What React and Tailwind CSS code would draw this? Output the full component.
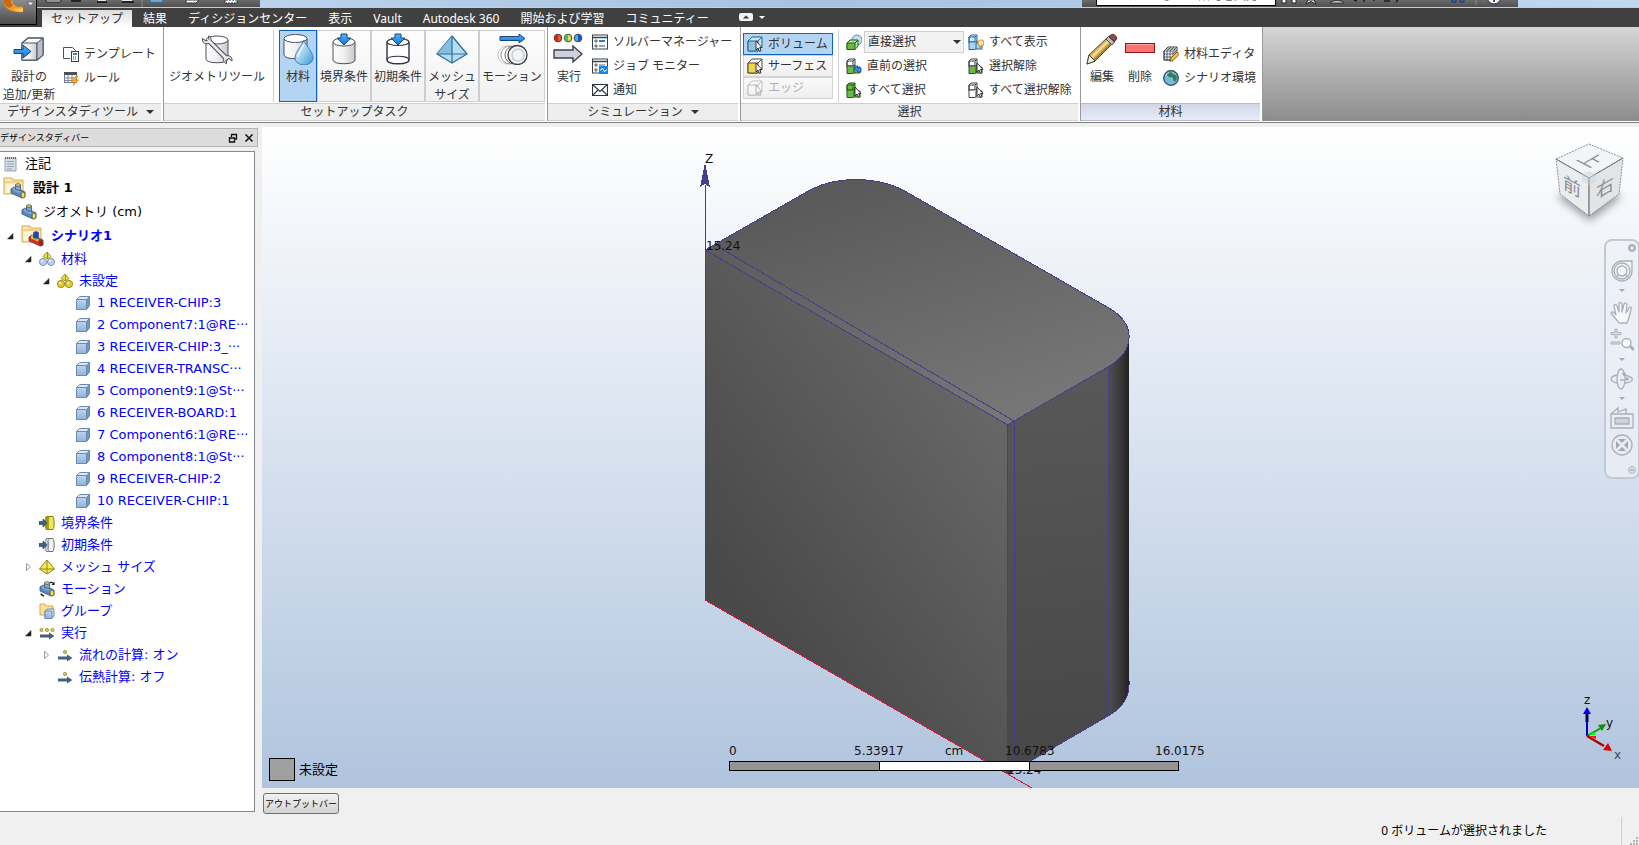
import { useState } from 'react'

const UI_FONT = "font-['Noto_Sans','Noto_Sans_CJK_JP',sans-serif]"
const TREE_FONT = "font-['DejaVu_Sans','Noto_Sans_CJK_JP',sans-serif]"

const TABS = ['セットアップ', '結果', 'ディシジョンセンター', '表示', 'Vault', 'Autodesk 360', '開始および学習', 'コミュニティー']

const PARTS = [
  '1 RECEIVER-CHIP:3',
  '2 Component7:1@RE···',
  '3 RECEIVER-CHIP:3_···',
  '4 RECEIVER-TRANSC···',
  '5 Component9:1@St···',
  '6 RECEIVER-BOARD:1',
  '7 Component6:1@RE···',
  '8 Component8:1@St···',
  '9 RECEIVER-CHIP:2',
  '10 RECEIVER-CHIP:1',
]

/* ---------- shared icon pieces ---------- */

function Big({ children }) {
  return <svg viewBox="0 0 32 32" className="w-8 h-8 shrink-0" fill="none" aria-hidden="true">{children}</svg>
}

function Small({ children }) {
  return <svg viewBox="0 0 16 16" className="w-4 h-4 shrink-0" fill="none" aria-hidden="true">{children}</svg>
}

function Defs() {
  return (
    <svg className="absolute w-0 h-0" aria-hidden="true">
      <defs>
        <linearGradient id="metal" x1="0" x2="1" y1="0" y2="0">
          <stop offset="0" stopColor="#fdfdfd" />
          <stop offset="0.5" stopColor="#f0f0f2" />
          <stop offset="1" stopColor="#c9c9cd" />
        </linearGradient>
        <linearGradient id="drop" x1="0" x2="1" y1="0" y2="1">
          <stop offset="0" stopColor="#e2f3fc" />
          <stop offset="0.5" stopColor="#9fd0f0" />
          <stop offset="1" stopColor="#3f95d8" />
        </linearGradient>
        <linearGradient id="arrow" x1="0" x2="0" y1="0" y2="1">
          <stop offset="0" stopColor="#56b4ff" />
          <stop offset="1" stopColor="#0f74d8" />
        </linearGradient>
        <linearGradient id="cubeBlue" x1="0" x2="0" y1="0" y2="1">
          <stop offset="0" stopColor="#bcd4ee" />
          <stop offset="1" stopColor="#8fb3da" />
        </linearGradient>
      </defs>
    </svg>
  )
}

function DownArrow({ className = '' }) {
  return (
    <svg viewBox="0 0 8 4" className={`w-2 h-1 shrink-0 ${className}`} aria-hidden="true">
      <path d="M0 0h8L4 4z" fill="currentColor" />
    </svg>
  )
}

function Cursor() {
  return <path d="M9 5v9l2-2 1.500 3.500 1.500-.7-1.400-3.300H15z" fill="#fff" stroke="#222" strokeWidth="0.900" />
}

/* ---------- ribbon icons ---------- */

const DesignUpdateIcon = () => (
  <Big>
    <path d="M9 10l6-5h15v17l-6 5H9z" fill="#fff" stroke="#4a5260" strokeWidth="1.400" strokeLinejoin="round" />
    <path d="M9 10h15v17H9z" fill="url(#metal)" stroke="#4a5260" />
    <path d="M24 10l6-5v17l-6 5z" fill="#b9bec8" stroke="#4a5260" />
    <path d="M1 16.500h9v-4.500l8 6.500-8 6.500v-4.500H1z" fill="url(#arrow)" stroke="#17467c" />
  </Big>
)

const TemplateIcon = () => (
  <Small>
    <path d="M.5 12.500V1.500h9l3 3v1" stroke="#4a5260" />
    <path d="M.5 12.500H7" stroke="#4a5260" />
    <rect x="8.500" y="5.500" width="7" height="10" fill="#fff" stroke="#39404c" />
    <rect x="10" y="7" width="4" height="2" fill="#2d80cf" />
    <path d="M10 11h4M10 13h4" stroke="#39404c" strokeDasharray="1 1" />
  </Small>
)

const RuleIcon = () => (
  <Small>
    <rect x="1.500" y="2.500" width="12" height="10" fill="#fff" stroke="#6f7782" />
    <path d="M1 2h13v3H1z" fill="#4a5260" />
    <path d="M1 8h12M1 10.500h11M5 5v8M9 5v8" stroke="#7f8792" />
    <path d="M13 6l-4 5h3l-2 4.500 5.500-5.500h-3l2.500-4z" fill="#ffb522" stroke="#e07d00" strokeWidth="0.700" />
  </Small>
)

const GeometryIcon = () => (
  <Big>
    <path d="M5 7v19c0 5 22 5 22 0V7" fill="url(#metal)" stroke="#4a5058" />
    <ellipse cx="16" cy="7" rx="11" ry="4" fill="#fff" stroke="#4a5058" />
    <path d="M7 7l19 19" stroke="#41474f" strokeWidth="5" />
    <path d="M7.500 3l.5 4-3 1-3.500-2.500C1 10 5 12 8.500 10 11 7 10.500 4 7.500 3zM25.500 30.500l-.5-4 3-1 3 2.500c.5-4.500-3.500-6.500-7-4.500-2.500 3-1.500 6 1.500 7z" fill="#eceef0" stroke="#41474f" />
    <path d="M7 7l19 19" stroke="#eceef0" strokeWidth="3" />
  </Big>
)

const MaterialIcon = () => (
  <Big>
    <path d="M2 6v16c0 5 23 5 23 0V6" fill="url(#metal)" stroke="#4a5058" />
    <ellipse cx="13.500" cy="5.500" rx="11.500" ry="4" fill="#fff" stroke="#4a5058" />
    <path d="M22 7c-2 6-9 12-9 18a9 7 0 0 0 18 0c0-6-7-12-9-18z" fill="url(#drop)" stroke="#3f7fb8" />
    <path d="M22 11c-2 5-6 9-6 13" stroke="#fff" strokeWidth="1.500" opacity="0.700" />
  </Big>
)

const BoundaryIcon = () => (
  <Big>
    <path d="M5 9v18c0 5 22 5 22 0V9" fill="url(#metal)" stroke="#4a5058" />
    <ellipse cx="16" cy="9" rx="11" ry="4" fill="#fff" stroke="#4a5058" />
    <path d="M13 1h6v4h4l-7 7-7-7h4z" fill="url(#arrow)" stroke="#17467c" />
  </Big>
)

const InitialIcon = () => (
  <Big>
    <path d="M5 9v18c0 5 22 5 22 0V9" fill="#fff" stroke="#30353d" strokeWidth="1.400" />
    <ellipse cx="16" cy="9" rx="11" ry="3.500" fill="#fff" stroke="#30353d" strokeWidth="1.200" />
    <path d="M5 27c0-5 22-5 22 0" stroke="#30353d" strokeWidth="1.200" />
    <path d="M13 1h6v4h4l-7 7-7-7h4z" fill="url(#arrow)" stroke="#17467c" />
  </Big>
)

const MeshIcon = () => (
  <Big>
    <path d="M16 3L1 21l15 9 15-9z" fill="#b5dcf0" stroke="#2c6f9f" strokeWidth="1.300" strokeLinejoin="round" />
    <path d="M16 3v18L1 21z" fill="#82bfe0" />
    <path d="M16 3v27M1 21h30" stroke="#2c6f9f" strokeWidth="1.200" />
  </Big>
)

const MotionIcon = () => (
  <Big>
    <path d="M4 3.500h19V1l6 4.500-6 4.500V7.500H4z" fill="url(#arrow)" stroke="#17467c" />
    <circle cx="11" cy="22" r="9" stroke="#c9c9cc" />
    <circle cx="14" cy="22" r="9" fill="#fff" stroke="#9a9a9e" />
    <circle cx="18" cy="22" r="9" fill="#fff" stroke="#6a6a70" />
    <circle cx="21.500" cy="22" r="9.500" fill="#f4f4f5" stroke="#3a4048" strokeWidth="1.300" />
    <circle cx="22" cy="22" r="6" stroke="#c9cbd0" strokeWidth="1.500" />
  </Big>
)

const SolveIcon = () => (
  <Big>
    <circle cx="5" cy="5" r="3.800" fill="#f2562a" stroke="#3a3a3a" />
    <path d="M5 1.500a3.500 3.500 0 0 0 0 7z" fill="#d91c1c" />
    <circle cx="15" cy="5" r="3.800" fill="#e6e23a" stroke="#3a3a3a" />
    <path d="M15 1.500a3.500 3.500 0 0 0 0 7z" fill="#35c46f" />
    <circle cx="25" cy="5" r="3.800" fill="#39c1d6" stroke="#3a3a3a" />
    <path d="M25 1.500a3.500 3.500 0 0 1 0 7z" fill="#2a4ccc" />
    <path d="M1 17h19v-4l9 8-9 8v-4H1z" fill="#cdd2dc" stroke="#3c424d" strokeWidth="1.400" />
  </Big>
)

const SolverManagerIcon = () => (
  <Small>
    <rect x="0.500" y="1" width="15" height="14" fill="#fff" stroke="#39404c" />
    <path d="M1 3.500h14" stroke="#39404c" strokeWidth="1.500" />
    <path d="M3 6h2v2H3zM3 11h2v2H3z" stroke="#39404c" strokeWidth="0.800" />
    <path d="M7 7h6" stroke="#1a84ee" strokeWidth="2" />
    <path d="M7 12h6" stroke="#39404c" />
  </Small>
)

const JobMonitorIcon = () => (
  <Small>
    <rect x="0.500" y="1" width="15" height="14" fill="#fff" stroke="#39404c" />
    <path d="M1 3.500h14" stroke="#39404c" strokeWidth="1.500" />
    <path d="M3 6h2v2H3zM3 11h2v2H3zM7 7h6" stroke="#39404c" strokeWidth="0.800" />
    <rect x="7" y="8" width="9" height="8" fill="#1a84ee" />
    <path d="M8 12h1l1.500-2 2 4 1.500-2h1" stroke="#fff" strokeWidth="0.900" />
  </Small>
)

const MailIcon = () => (
  <Small>
    <path d="M0.500 2.500h15v11H.5zM.5 2.500l7.500 7 7.500-7M.5 13.500L6 8M15.500 13.500L10 8" stroke="#30353d" strokeWidth="1.100" />
  </Small>
)

function PickIcon({ face, top, line, faded }) {
  return (
    <Small>
      <g opacity={faded ? 0.35 : 1}>
        <path d="M1 5l4-4h10v10l-4 4H1z" fill={top} stroke={line} />
        <path d="M1 5h10v10H1z" fill={face} stroke={line} />
        <path d="M11 5l4-4" stroke={line} />
        <Cursor />
      </g>
    </Small>
  )
}

const DirectSelectIcon = () => (
  <Small>
    <circle cx="11" cy="6" r="5" fill="#bfe0f2" stroke="#5d8fb0" />
    <path d="M1 9l3-3h8v6l-3 3.500H1z" fill="#bfe3a4" stroke="#205f14" />
    <path d="M1 9h8v6.500H1z" fill="#6cb844" stroke="#205f14" />
    <path d="M9 9l3-3" stroke="#205f14" />
  </Small>
)

function StackIcon({ upper, lower, line, children }) {
  return (
    <Small>
      <path d="M1 3l2-2h6v7l-2 1H1z" fill={upper} stroke={line} />
      <path d="M1 3h6v5H1zM7 3l2-2" stroke={line} />
      <path d="M1 8h6l2-1v7l-2 1.500H1z" fill={lower} stroke={line} />
      <path d="M8 9h6v6H8z" fill={lower} stroke={line} />
      {children}
    </Small>
  )
}

const BackArrow = () => <path d="M8 11l3.500-3.500V10H15v4h-3.500v-1.500z" fill="#2f92f0" stroke="#12539a" strokeWidth="0.800" />
const Bulb = () => (
  <g>
    <circle cx="13" cy="9" r="3" fill="#ffe9a0" stroke="#f29a1e" strokeWidth="1.200" />
    <path d="M11.500 12.500h3v3h-3z" fill="#8a94a3" />
  </g>
)

const PencilIcon = () => (
  <Big>
    <path d="M3 22L23 3l6 5L9 28l-8 3z" fill="#d9b35a" stroke="#4b4232" strokeLinejoin="round" />
    <path d="M6 24L25.500 5" stroke="#f3e0a4" strokeWidth="2" />
    <path d="M8 27L28 7.500" stroke="#a67c26" strokeWidth="1.500" />
    <path d="M3 22l6 6-8 3z" fill="#f4f1ea" stroke="#4b4232" />
    <path d="M20 6l6 6 2.500-3-6-5.500z" fill="#b9bfc9" stroke="#474d57" />
    <path d="M23 3.500l2.500-2c2-1 6 2 5 4.500l-2 2.500z" fill="#8f4a44" stroke="#4d2b28" />
  </Big>
)

const RemoveIcon = () => (
  <Big>
    <rect x="1.500" y="10.500" width="29" height="9" fill="#fa7471" stroke="#8c1414" />
    <path d="M2.500 11.500h27" stroke="#fca5a2" />
  </Big>
)

const MaterialEditorIcon = () => (
  <Small>
    <path d="M1 5l4-4h9v9l-4 4H1z" fill="#fff" stroke="#3b424d" />
    <path d="M1 5h9v9H1zM10 5l4-4M1 8h9M1 11h9M4 5v9M7 5v9M4 5l4-4M7 5l4-4M12 3v9M10 8l4-4M3 3h9" stroke="#3b424d" strokeWidth="0.800" />
    <path d="M7 15.500l1-3.500 6-6 2 2.500-6 6z" fill="#ffbd3a" stroke="#6b4a13" strokeWidth="0.800" />
  </Small>
)

const GlobeIcon = () => (
  <Small>
    <circle cx="8" cy="8" r="7.300" fill="#79b9d8" stroke="#263f5c" strokeWidth="1.200" />
    <path d="M4 3.500c2-2 5-1.500 5.500 0s3 .5 4 2.500-.5 6-2 5.500-1-3-2-4-3 .5-4-1-2-1-1.500-3z" fill="#2f7d54" />
    <path d="M3 6c0-1 1-3 3-3.500" stroke="#d8f0fa" />
  </Small>
)

/* ---------- ribbon pieces ---------- */

function Panel({ title, menu, tint, className = '', children }) {
  return (
    <section className={`flex flex-col bg-white border-r border-[#9a9a9a] ${className}`}>
      <div className="flex h-[76px] pt-[3px]">{children}</div>
      <div
        className={`mr-0.5 flex h-[18px] items-center justify-center gap-2 border-y ${
          tint ? 'border-[#b8bccb] bg-linear-to-b from-[#d2d6e6] to-[#e8edfb]' : 'border-[#cfcfcf] bg-[#eeeeee]'
        }`}
      >
        <span>{title}</span>
        {menu && <DownArrow />}
      </div>
    </section>
  )
}

function BigButton({ icon, label, className = '' }) {
  return (
    <button type="button" className={`flex flex-col items-center whitespace-pre-line pt-[3px] leading-[18px] ${className}`}>
      {icon}
      <span className="mt-[3px]">{label}</span>
    </button>
  )
}

function SmallButton({ icon, label }) {
  return (
    <button type="button" className="flex h-6 items-center gap-[5px] text-left leading-4">
      {icon}
      <span>{label}</span>
    </button>
  )
}

const TASKS = [
  { label: '材料', icon: <MaterialIcon />, width: 'w-[38px]' },
  { label: '境界条件', icon: <BoundaryIcon />, width: 'w-[54px]' },
  { label: '初期条件', icon: <InitialIcon />, width: 'w-[54px]' },
  { label: 'メッシュ\nサイズ', icon: <MeshIcon />, width: 'w-[54px]' },
  { label: 'モーション', icon: <MotionIcon />, width: 'w-[66px]' },
]

const PICKS = [
  { label: 'ボリューム', icon: <PickIcon face="#8cc4e6" top="#c8e6f6" line="#2f5f86" /> },
  { label: 'サーフェス', icon: <PickIcon face="#f3d44a" top="#fff" line="#4a4a3a" /> },
  { label: 'エッジ', icon: <PickIcon face="#fff" top="#fff" line="#555" faded />, disabled: true },
]

function Ribbon() {
  const [task, setTask] = useState('材料')
  const [pick, setPick] = useState('ボリューム')

  return (
    <div className="flex h-24 shrink-0 border-b border-[#808080] bg-white">
      <div className="mb-px flex w-full whitespace-nowrap bg-linear-to-b from-[#d6d6d6] to-[#8c8c8c]">
        <Panel title="デザインスタディツール" menu className="w-[164px] shrink-0">
          <BigButton icon={<DesignUpdateIcon />} label={'設計の\n追加/更新'} className="w-[58px]" />
          <div className="flex flex-col pl-[5px] pt-3">
            <SmallButton icon={<TemplateIcon />} label="テンプレート" />
            <SmallButton icon={<RuleIcon />} label="ルール" />
          </div>
        </Panel>

        <Panel title="セットアップタスク" className="w-[384px] shrink-0">
          <BigButton icon={<GeometryIcon />} label="ジオメトリツール" className="ml-1 w-[98px]" />
          <div className="ml-[7px] mr-[5px] h-[72px] w-px bg-[#cfcfcf]" />
          {TASKS.map((t) => (
            <button
              key={t.label}
              type="button"
              aria-pressed={task === t.label}
              onClick={() => setTask(t.label)}
              className={`flex h-[72px] flex-col items-center whitespace-pre-line border pt-0.5 leading-[18px] ${t.width} ${
                task === t.label
                  ? 'border-[#1164bd] bg-[#b4d4f3]'
                  : 'border-[#cdcdcd] bg-linear-to-b from-[#fdfdfd] to-[#f1f1f1]'
              }`}
            >
              {t.icon}
              <span className="mt-[3px]">{t.label}</span>
            </button>
          ))}
        </Panel>

        <Panel title="シミュレーション" menu className="w-[193px] shrink-0">
          <BigButton icon={<SolveIcon />} label="実行" className="ml-[3px] w-9" />
          <div className="flex flex-col pl-[5px]">
            <SmallButton icon={<SolverManagerIcon />} label="ソルバーマネージャー" />
            <SmallButton icon={<JobMonitorIcon />} label="ジョブ モニター" />
            <SmallButton icon={<MailIcon />} label="通知" />
          </div>
        </Panel>

        <Panel title="選択" className="w-[340px] shrink-0">
          <div className="flex flex-col pl-0.5 pt-[3px]">
            {PICKS.map((p) => (
              <button
                key={p.label}
                type="button"
                disabled={p.disabled}
                aria-pressed={pick === p.label}
                onClick={() => setPick(p.label)}
                className={`flex h-[22px] w-[90px] items-center gap-[5px] border pl-[3px] leading-4 disabled:text-[#b0b0b0] ${
                  pick === p.label
                    ? 'border-[#1164bd] bg-[#b4d4f3]'
                    : 'border-[#d4d4d4] bg-linear-to-b from-[#fafafa] to-[#efefef]'
                }`}
              >
                {p.icon}
                <span>{p.label}</span>
              </button>
            ))}
          </div>
          <div className="ml-[5px] mr-[7px] h-[72px] w-px bg-[#cfcfcf]" />
          <div className="flex w-[122px] flex-col">
            <div className="flex h-6 items-center gap-0.5">
              <DirectSelectIcon />
              <div className="relative">
                <select
                  aria-label="選択モード"
                  className="h-[22px] w-[100px] appearance-none border border-[#cfcfcf] bg-[#f2f2f2] pl-[3px] leading-4"
                >
                  <option>直接選択</option>
                </select>
                <DownArrow className="pointer-events-none absolute right-[3px] top-[9px]" />
              </div>
            </div>
            <SmallButton
              icon={<StackIcon upper="#fff" lower="#6cb844" line="#3b424d"><BackArrow /></StackIcon>}
              label="直前の選択"
            />
            <SmallButton
              icon={<StackIcon upper="#6cb844" lower="#6cb844" line="#205f14"><Cursor /></StackIcon>}
              label="すべて選択"
            />
          </div>
          <div className="flex flex-col">
            <SmallButton icon={<StackIcon upper="#cfe8fa" lower="#a9d3f2" line="#2467a3"><Bulb /></StackIcon>} label="すべて表示" />
            <SmallButton icon={<StackIcon upper="#fff" lower="#6cb844" line="#3b424d"><Cursor /></StackIcon>} label="選択解除" />
            <SmallButton icon={<StackIcon upper="#fff" lower="#fff" line="#3b424d"><Cursor /></StackIcon>} label="すべて選択解除" />
          </div>
        </Panel>

        <Panel title="材料" tint className="w-[182px] shrink-0">
          <BigButton icon={<PencilIcon />} label="編集" className="ml-[3px] w-9" />
          <BigButton icon={<RemoveIcon />} label="削除" className="ml-0.5 w-9" />
          <div className="flex flex-col pl-[5px] pt-3">
            <SmallButton icon={<MaterialEditorIcon />} label="材料エディタ" />
            <SmallButton icon={<GlobeIcon />} label="シナリオ環境" />
          </div>
        </Panel>
      </div>
    </div>
  )
}

/* ---------- window frame and tabs ---------- */

function TitleStrip() {
  return (
    <header className="flex h-2 shrink-0 items-end overflow-hidden border-b border-[#c3cfdd] bg-linear-to-r from-[#c4daf0] via-[#a6c2e0] to-[#c0d8f0]">
      <div className="flex h-[7px] w-[260px] items-end bg-linear-to-b from-[#6b6b6b] to-[#505050]">
        <svg viewBox="0 0 260 7" className="h-[7px] w-[260px]" fill="none" aria-hidden="true">
          <path d="M46 0v2h15V0z" fill="#fff" stroke="#222" />
          <path d="M71 1h10M97 2h10M122 2h12" stroke="#222" strokeWidth="2" />
          <path d="M98 0h8M122 0h10" stroke="#e4e8ee" strokeWidth="2" />
          <path d="M142 0v7" stroke="#8a8a8a" />
          <path d="M150 0v2h13V0z" fill="#bfe0f2" stroke="#2467a3" />
          <path d="M186 0v3h10l3-3z" fill="#fff" stroke="#333" />
          <path d="M225 0v3h12V0z" fill="#fff" stroke="#222" strokeDasharray="2 1" />
        </svg>
      </div>
      <div className="grow" />
      <div className="flex h-[7px] w-[436px] items-end bg-linear-to-b from-[#6b6b6b] to-[#505050]">
        <input
          aria-label="検索"
          placeholder="キーワードまたは語句を入力"
          className="mb-px ml-3.5 h-5 w-[180px] shrink-0 border border-black bg-white px-[5px] pb-px text-xs placeholder:text-[#777]"
        />
        <svg viewBox="0 0 240 7" className="h-[7px] w-60 shrink-0" fill="none" aria-hidden="true">
          <path d="M6 0v3h4V0M16 0v3h4V0" fill="#fff" stroke="#222" />
          <path d="M32 0l-2 4 5-2.500 5 2.500-2-4z" fill="#fff" stroke="#222" />
          <path d="M54 3c0-3 14-3 14 0z" fill="#fff" stroke="#222" />
          <path d="M78 0l3 1M88 0v2M98 0v1M108 1h6M122 0l-2 2" stroke="#1c1c1c" strokeWidth="1.500" />
          <path d="M176 0v2h4V0M184 0v2h4V0" fill="#3b66b8" stroke="#1b2f66" />
          <path d="M200 0v5" stroke="#8a8a8a" />
          <circle cx="218" cy="-3" r="7" fill="#fff" stroke="#222" />
          <path d="M218 0v2" stroke="#2458b0" strokeWidth="2" />
        </svg>
      </div>
      <div className="w-[121px]" />
    </header>
  )
}

function TabBar() {
  const [tab, setTab] = useState('セットアップ')
  return (
    <nav className="flex h-[19px] shrink-0 items-end bg-[#404040] pl-[42px]">
      {TABS.map((t) => (
        <button
          key={t}
          type="button"
          onClick={() => setTab(t)}
          className={`h-[17px] whitespace-nowrap leading-[17px] ${
            t === tab ? 'bg-linear-to-b from-[#dcdcdc] to-white px-[9px] text-[#333]' : 'ml-px px-2.5 text-white'
          }`}
        >
          {t}
        </button>
      ))}
      <button type="button" aria-label="リボンの最小化" className="mb-1.5 ml-5 flex items-center gap-1.5 text-white">
        <svg viewBox="0 0 14 8" className="h-2 w-3.5" aria-hidden="true">
          <rect width="14" height="8" rx="2" fill="#f2f2f2" />
          <path d="M4 5.500h6L7 2.500z" fill="#333" />
        </svg>
        <svg viewBox="0 0 6 3" className="h-[3px] w-1.5" aria-hidden="true"><path d="M0 0h6L3 3z" fill="#fff" /></svg>
      </button>
    </nav>
  )
}

function AppButton() {
  return (
    <button
      type="button"
      aria-label="アプリケーションメニュー"
      className="absolute left-0 top-0 h-[25px] w-[37px] border-b border-r border-black bg-linear-to-b from-[#8d8d8d] to-[#4b4b4b]"
    >
      <svg viewBox="0 0 36 24" className="h-6 w-9" fill="none" aria-hidden="true">
        <path d="M3 0c1 8 7 13 20 12V6.500c-7 1-10-1-11-6.500z" fill="#f6991d" />
        <path d="M3 0c1 4 3 7 7 8l3-3c-2-1-2-3-2-5z" fill="#c86a12" />
        <path d="M13 8c3 1 6 1 10 0v4c-4 0-8-1-10-4z" fill="#ffc34d" />
        <path d="M27 2h7l-3.500 4z" fill="#e8e8e8" stroke="#333" strokeWidth="0.500" />
      </svg>
    </button>
  )
}

/* ---------- design study tree ---------- */

const NoteIcon = () => (
  <Small>
    <path d="M2 2h11v13H2z" fill="#d5dce5" stroke="#9aa5b2" />
    <path d="M2 2h11" stroke="#5e6874" strokeWidth="2" strokeDasharray="1 1" />
    <path d="M4 5.500h7M4 8h7M4 10.500h7M4 13h5" stroke="#98a4b3" />
  </Small>
)

function Pipe({ hot }) {
  return (
    <g strokeWidth="0.800">
      <path d="M1 6l3-2 11 5v5l-3 1-11-5z" fill={hot ? '#e02a1c' : '#5b87bd'} stroke="#3a4f70" />
      <path d="M3 5l3-1 5 2.500-1 4-7-3z" fill={hot ? '#f2c521' : '#7ea6d4'} />
      <path d="M5 5.500l2-.5 2.500 1-1 3-3-1z" fill={hot ? '#37c05a' : '#7ea6d4'} />
      <path d="M5.500 2h5v5.500l-5-1z" fill={hot ? '#2437d8' : '#7ea6d4'} stroke="#3a5580" />
      <ellipse cx="8" cy="2" rx="2.500" ry="1.300" fill={hot ? '#2437d8' : '#f2e04c'} stroke="#3a5580" />
      <ellipse cx="13" cy="12" rx="2" ry="3" fill={hot ? '#c01010' : '#f2e04c'} stroke="#5a5a3a" />
    </g>
  )
}

function FolderIcon({ hot }) {
  return (
    <svg viewBox="0 0 24 24" className="h-6 w-6 shrink-0" fill="none" aria-hidden="true">
      <path d="M1 2h8l1 2h10v14H1z" fill="#fce9b4" stroke="#d6a84c" />
      <path d="M1 6h19" stroke="#e2bc6a" />
      <path d="M3 8h15v9H3z" fill="#fff4d6" />
      <g transform="translate(7 7)"><Pipe hot={hot} /></g>
    </svg>
  )
}

const PipeIcon = () => <Small><Pipe /></Small>

function SpheresIcon({ gold }) {
  const c = gold ? '#e0cf2c' : '#b9d0e8'
  const s = gold ? '#7d7311' : '#6c87a5'
  return (
    <Small>
      <path d="M8 1l4 4.500L8.500 8 4 5.500z" fill="#ecdc48" stroke="#8d8220" strokeWidth="0.800" />
      <path d="M8.500 1.500V8" stroke="#8d8220" strokeWidth="0.800" />
      <circle cx="4" cy="11" r="3.600" fill={c} stroke={s} strokeWidth="0.800" />
      <circle cx="12" cy="11" r="3.600" fill={c} stroke={s} strokeWidth="0.800" />
      <circle cx="3" cy="10" r="1" fill="#fff" opacity="0.800" />
      <circle cx="11" cy="10" r="1" fill="#fff" opacity="0.800" />
    </Small>
  )
}

const CubeIcon = () => (
  <Small>
    <path d="M1.500 4.500l3-3h10v9l-3 4h-10z" fill="#dce8f5" stroke="#6b8cb0" />
    <path d="M1.500 4.500h10v10h-10z" fill="url(#cubeBlue)" stroke="#6b8cb0" />
    <path d="M11.500 4.500l3-3v9l-3 4z" fill="#6f97c2" stroke="#6b8cb0" />
  </Small>
)

function InletIcon({ gold }) {
  return (
    <Small>
      <path d="M8 1.500h6c1.500 2 1.500 11 0 13H8c1.500-2 1.500-11 0-13z" fill={gold ? '#f3e64a' : '#eef0f2'} stroke={gold ? '#8a7d10' : '#6b737d'} />
      <path d="M7 1.500h3c-1.500 3-1.500 10 0 13H7c-1.500-2-1.500-11 0-13z" fill={gold ? '#a39a1c' : '#c5cad0'} stroke={gold ? '#8a7d10' : '#6b737d'} strokeWidth="0.600" />
      <path d="M0 6.500h4V4l4 4-4 4V9.500H0z" fill="#3c6284" stroke="#1f3a55" strokeWidth="0.600" />
    </Small>
  )
}

const TetraIcon = () => (
  <Small>
    <path d="M8 1L.5 10 8 15l7.500-5z" fill="#f4ea62" stroke="#94880f" />
    <path d="M8 1v14M.5 10h15" stroke="#94880f" />
  </Small>
)

const RotateIcon = () => (
  <Small>
    <Pipe />
    <path d="M11 1.500c2-.5 3 0 4 1.500M2 12.500c0 1 1 2 3 2.500" stroke="#111" strokeWidth="1.300" />
    <path d="M15.500 1v3h-3z" fill="#111" />
  </Small>
)

const GroupIcon = () => (
  <Small>
    <path d="M1 1h5l1 2h7v9H1z" fill="#fbdf94" stroke="#d6a84c" />
    <path d="M6 8l2-2h7v7l-2 2.500H6z" fill="#dce8f5" stroke="#6b8cb0" />
    <path d="M6 8h7v7.500H6z" fill="url(#cubeBlue)" stroke="#6b8cb0" />
  </Small>
)

function RunIcon({ single }) {
  return (
    <Small>
      {!single && <circle cx="2.500" cy="5" r="1.600" fill="#d8cf30" stroke="#77701a" strokeWidth="0.600" />}
      <circle cx="8" cy="5" r="1.600" fill="#d8cf30" stroke="#77701a" strokeWidth="0.600" />
      {!single && <circle cx="13.500" cy="5" r="1.600" fill="#d8cf30" stroke="#77701a" strokeWidth="0.600" />}
      <path d="M1 9.500h9v-2l5.500 3.500-5.500 3.500v-2H1z" fill="#43607e" />
    </Small>
  )
}

function Toggle({ state }) {
  return (
    <svg viewBox="0 0 8 8" className="mr-[7px] h-2 w-2 shrink-0" fill="none" aria-hidden="true">
      {state === 'open' && <path d="M7 1.500v5.500H1.500z" fill="#222" stroke="#222" strokeWidth="0.500" />}
      {state === 'closed' && <path d="M2.500 .5l4 3.500-4 3.500z" fill="#fff" stroke="#999" />}
    </svg>
  )
}

const INDENT = ['pl-[3px]', 'pl-[3px]', 'pl-[6px]', 'pl-[6px]', 'pl-[24px]', 'pl-[42px]', 'pl-[60px]']

const TREE = [
  { label: '注記', icon: <NoteIcon />, level: 0, tall: true, black: true, flat: true },
  { label: '設計 1', icon: <FolderIcon />, level: 1, tall: true, black: true, bold: true, flat: true },
  { label: 'ジオメトリ (cm)', icon: <PipeIcon />, level: 2, tall: true, black: true },
  { label: 'シナリオ1', icon: <FolderIcon hot />, level: 3, tall: true, bold: true, toggle: 'open' },
  { label: '材料', icon: <SpheresIcon />, level: 4, toggle: 'open' },
  { label: '未設定', icon: <SpheresIcon gold />, level: 5, toggle: 'open' },
  ...PARTS.map((p) => ({ label: p, icon: <CubeIcon />, level: 6 })),
  { label: '境界条件', icon: <InletIcon gold />, level: 4 },
  { label: '初期条件', icon: <InletIcon />, level: 4 },
  { label: 'メッシュ サイズ', icon: <TetraIcon />, level: 4, toggle: 'closed' },
  { label: 'モーション', icon: <RotateIcon />, level: 4 },
  { label: 'グループ', icon: <GroupIcon />, level: 4 },
  { label: '実行', icon: <RunIcon />, level: 4, toggle: 'open' },
  { label: '流れの計算: オン', icon: <RunIcon single />, level: 5, toggle: 'closed' },
  { label: '伝熱計算: オフ', icon: <RunIcon single />, level: 5 },
]

function StudyBar() {
  return (
    <aside className="flex w-[262px] shrink-0 flex-col pt-[5px]">
      <div className="mr-1 flex h-[19px] shrink-0 items-center border border-l-0 border-[#b4b4b4] bg-[#dcdcdc] pr-[3px] text-black">
        <h2 className="grow whitespace-nowrap text-[9px] leading-none">デザインスタディバー</h2>
        <button type="button" aria-label="フロート" className="mr-1.5">
          <svg viewBox="0 0 10 10" className="h-2.5 w-2.5" fill="none" aria-hidden="true">
            <path d="M3 1.500h6M3.500 1v3M8.500 1v5H7M1 5h6M1.500 4v5h5V4" stroke="#111" strokeWidth="1.300" />
          </svg>
        </button>
        <button type="button" aria-label="閉じる">
          <svg viewBox="0 0 10 10" className="h-2.5 w-2.5" fill="none" aria-hidden="true">
            <path d="M1.500 1.500l7 7M8.500 1.500l-7 7" stroke="#111" strokeWidth="1.600" />
          </svg>
        </button>
      </div>
      <ul className={`mb-[33px] mr-[7px] mt-1 grow border border-l-0 border-[#828790] bg-white text-[13px] ${TREE_FONT}`}>
        {TREE.map((n) => (
          <li key={n.label}>
            <button
              type="button"
              className={`flex w-full items-center gap-1.5 whitespace-nowrap text-left leading-5 ${INDENT[n.level]} ${
                n.tall ? 'h-6' : 'h-[22px]'
              } ${n.black ? 'text-black' : 'text-[#0000ff]'} ${n.bold ? 'font-bold' : ''}`}
            >
              <span className="flex items-center">
                {!n.flat && <Toggle state={n.toggle} />}
                {n.icon}
              </span>
              <span>{n.label}</span>
            </button>
          </li>
        ))}
      </ul>
    </aside>
  )
}

/* ---------- 3D viewport ---------- */

function Model() {
  return (
    <svg viewBox="262 127 1377 661" className="absolute inset-0 h-full w-full" fill="none" role="img" aria-label="モデル">
      <defs>
        <linearGradient id="faceTop" gradientUnits="userSpaceOnUse" x1="880" y1="180" x2="960" y2="425">
          <stop offset="0" stopColor="#5a5a5a" />
          <stop offset="1" stopColor="#767676" />
        </linearGradient>
        <linearGradient id="faceLeft" gradientUnits="userSpaceOnUse" x1="740" y1="600" x2="990" y2="420">
          <stop offset="0" stopColor="#494949" />
          <stop offset="1" stopColor="#666666" />
        </linearGradient>
        <linearGradient id="faceRight" gradientUnits="userSpaceOnUse" x1="1040" y1="390" x2="1070" y2="740">
          <stop offset="0" stopColor="#575757" />
          <stop offset="1" stopColor="#484848" />
        </linearGradient>
        <linearGradient id="faceRound" gradientUnits="userSpaceOnUse" x1="1108" y1="0" x2="1130" y2="0">
          <stop offset="0" stopColor="#505050" />
          <stop offset="0.500" stopColor="#3c3c3c" />
          <stop offset="1" stopColor="#1e1e1e" />
        </linearGradient>
      </defs>
      {/* side faces run slightly under the top face so no seam shows */}
      <path d="M705 250L712 248L1008 419V774L705 600z" fill="url(#faceLeft)" />
      <path d="M1008 419L1108 362V716L1014 771L1008 774z" fill="url(#faceRight)" />
      <path d="M1108 362C1122 356 1129 348 1129 336V685C1129 698 1122 708 1108 716z" fill="url(#faceRound)" />
      <g stroke="#483d8b" shapeRendering="crispEdges">
        <path
          d="M705 250L810 190C836 176 876 176 903 190L1109 308C1136 324 1136 350 1108 367L1014 421L1008 425z"
          fill="url(#faceTop)"
        />
        <path d="M715 245L1014 421M1014.500 421V771M1007.500 425V774M1108.500 367V716" />
        <path d="M1129 681C1130 698 1122 708 1108 716L1008 774" />
        <path d="M705.500 600V185" />
        <path d="M705 163L710 187L705 184L700 187z" fill="#483d8b" stroke="none" />
      </g>
      <path d="M705 600L1032 788" stroke="#dc143c" shapeRendering="crispEdges" />
      <g className="font-['DejaVu_Sans',sans-serif] text-xs" fill="#111">
        <text x="705" y="163">Z</text>
        <text x="706" y="250">15.24</text>
        <text x="1007" y="774">15.24</text>
        <text x="729" y="755">0</text>
        <text x="854" y="755">5.33917</text>
        <text x="945" y="755">cm</text>
        <text x="1005" y="755">10.6783</text>
        <text x="1155" y="755">16.0175</text>
      </g>
      <rect x="729.500" y="761.500" width="449" height="9" fill="#959595" stroke="#000" />
      <rect x="879.500" y="761.500" width="150" height="9" fill="#fff" stroke="#000" />
    </svg>
  )
}

function ViewCube() {
  return (
    <svg viewBox="0 0 84 90" className="absolute right-2 top-3 h-[90px] w-[84px]" fill="none" role="img" aria-label="ビューキューブ">
      <defs>
        <filter id="soft" x="-30%" y="-30%" width="160%" height="160%"><feGaussianBlur stdDeviation="4" /></filter>
      </defs>
      <path d="M10 58l33-16 32 16-32 24z" fill="#7c8187" opacity="0.750" filter="url(#soft)" />
      <path d="M42 5l34 14-34 20L9 20z" fill="#f3f4f5" stroke="#8d9094" strokeDasharray="2 1" />
      <path d="M9 20l33 19v38L13 55z" fill="#ebecee" stroke="#8d9094" strokeDasharray="2 1" />
      <path d="M76 19L42 39v38l30-22z" fill="#e3e4e6" stroke="#8d9094" strokeDasharray="2 1" />
      <path d="M9 20l33 19 34-20M42 39v38" stroke="#77797d" />
      <path d="M42 32l7 3v7l-7 4-7-4v-7z" fill="#c9d5e0" opacity="0.500" />
      <g className="font-['Noto_Sans_CJK_JP',sans-serif]" fill="#8b8f95" fontSize="18" textAnchor="middle">
        <text transform="translate(37 25) rotate(28) skewX(-32)">上</text>
        <text transform="translate(25 54) skewY(28)">前</text>
        <text transform="translate(58 55) skewY(-30)">右</text>
      </g>
    </svg>
  )
}

function NavTool({ label, children, menu }) {
  return (
    <button type="button" aria-label={label} className="flex flex-col items-center">
      <svg viewBox="0 0 24 24" className="h-6 w-6" fill="none" stroke="#a9b0ba" strokeWidth="1.300" aria-hidden="true">{children}</svg>
      {menu && (
        <svg viewBox="0 0 6 3" className="my-1.5 h-[3px] w-1.5" aria-hidden="true"><path d="M0 0h6L3 3z" fill="#a2a9b3" /></svg>
      )}
    </button>
  )
}

function NavBar() {
  return (
    <div className="absolute -right-px top-28 flex h-60 w-9 flex-col items-center rounded-lg border-2 border-[#c3cad4] bg-[#eef1f6]/70">
      <svg viewBox="0 0 8 8" className="mr-0.5 mt-[3px] h-2 w-2 shrink-0 self-end" aria-hidden="true">
        <circle cx="4" cy="4" r="4" fill="#aeb4bd" />
        <path d="M2.500 2.500l3 3M5.500 2.500l-3 3" stroke="#fff" />
      </svg>
      <div className="mt-[7px] flex grow flex-col items-center">
        <NavTool label="ホイール" menu>
          <path d="M12 2h10v10a10 10 0 1 1-10-10z" />
          <circle cx="12" cy="12" r="8" />
          <circle cx="12" cy="12" r="5" fill="#f6f8fa" />
          <path d="M8.500 15.500L6 18M15.500 15.500L18 18" />
        </NavTool>
        <div className="mt-[3px]">
          <NavTool label="画面移動">
            <path
              d="M9 22c-2-3-5-6-8-10 1-2 3-1 5 2L4 5c0-2 2-2 3 0l2 6V3c0-2 2-2 3 0v8l2-8c1-2 3-1 3 1l-1 8 3-5c1-2 3-1 2 1-1 5-2 10-4 14z"
              fill="#f6f8fa"
              strokeLinejoin="round"
            />
          </NavTool>
        </div>
        <div className="mt-[3px]">
          <NavTool label="ズーム" menu>
            <path d="M5 1h2v3.500h4v2H7V10H5V6.500H1v-2h4zM1 14h9v2H1z" fill="#dfe3e9" strokeWidth="1" />
            <path d="M20 18l4 4" strokeWidth="3" />
            <circle cx="16.500" cy="15" r="4.500" fill="#f6f8fa" />
          </NavTool>
        </div>
        <NavTool label="オービット" menu>
          <ellipse cx="11" cy="12" rx="4" ry="10" />
          <path d="M8 8c-9 1-9 7 0 8M14 8c11 2 11 7 1 8M10 13h4M14 5v4M12 7h4M17 10v4M15 12h4" />
        </NavTool>
        <NavTool label="視線">
          <path d="M1 8h22v14H1zM1 8l7-6v4l8-3v5" />
          <path d="M5 12h14v6H5z" fill="#ccd3dc" />
        </NavTool>
        <div className="mt-[3px]">
          <NavTool label="中心">
            <circle cx="12" cy="12" r="10" />
            <path d="M8 6h8l-4 4zM8 18h8l-4-4zM6 8v8l4-4zM18 8v8l-4-4z" fill="#a2a9b3" stroke="none" />
          </NavTool>
        </div>
      </div>
      <svg viewBox="0 0 8 8" className="mb-[3px] mr-0.5 h-2 w-2 shrink-0 self-end" aria-hidden="true">
        <circle cx="4" cy="4" r="3.500" fill="#dfe3e9" stroke="#aeb4bd" />
        <path d="M2 4h4" stroke="#8f96a0" />
      </svg>
    </div>
  )
}

function Triad() {
  return (
    <svg viewBox="0 0 50 72" className="absolute bottom-6 right-3 h-[72px] w-[50px]" fill="none" role="img" aria-label="座標軸">
      <path d="M10 44V24" stroke="#0000c8" strokeWidth="2" />
      <path d="M10 30V22" stroke="#000050" strokeWidth="3" />
      <path d="M10 15l4 7H6z" fill="#0000e6" />
      <path d="M10 44l14-8" stroke="#00a000" strokeWidth="2" />
      <path d="M29 32l-8 1 4 6z" fill="#0a900a" />
      <path d="M12 43l5-3 2 3z" fill="#00ff20" />
      <path d="M10 44l17 10" stroke="#b00000" strokeWidth="2.500" />
      <path d="M35 59l-9-1 5-7z" fill="#d80000" />
      <path d="M12 44h7v3z" fill="#ff1010" />
      <g className="font-['DejaVu_Sans',sans-serif] text-xs" fill="#111">
        <text x="7" y="12">z</text>
        <text x="29" y="35">y</text>
        <text x="37" y="67" fill="#445">x</text>
      </g>
    </svg>
  )
}

function Viewport() {
  return (
    <main className="relative min-h-0 grow overflow-hidden bg-linear-to-b from-white to-[#b0c4de]">
      <Model />
      <ViewCube />
      <NavBar />
      <Triad />
      <div className={`absolute bottom-[7px] left-[7px] flex items-center gap-1 text-[13px] leading-none text-black ${TREE_FONT}`}>
        <span className="h-[23px] w-[26px] border border-black bg-[#a0a0a0]" />
        未設定
      </div>
    </main>
  )
}

export default function App() {
  return (
    <div className={`relative flex h-screen flex-col overflow-hidden bg-[#f0f0f0] text-xs text-[#333] ${UI_FONT}`}>
      <Defs />
      <TitleStrip />
      <TabBar />
      <AppButton />
      <Ribbon />
      <div className="flex min-h-0 grow">
        <StudyBar />
        <div className="flex min-w-0 grow flex-col pt-1">
          <Viewport />
          <footer className="flex h-[57px] shrink-0 justify-between text-black">
            <button
              type="button"
              className="ml-px mt-[5px] h-[21px] w-[76px] whitespace-nowrap rounded-[3px] border border-[#707070] bg-linear-to-b from-[#f3f3f3] to-[#d2d2d2] text-[9px] leading-none"
            >
              アウトプットバー
            </button>
            <div className="flex h-7 items-center self-end">
              <p className="mr-[74px]">0 ボリュームが選択されました</p>
              <div className="h-full w-px bg-[#d0d0d0]" />
              <svg viewBox="0 0 17 28" className="h-7 w-[17px]" aria-hidden="true">
                <path d="M14 20h2v2h-2zM11 23h2v2h-2zM14 23h2v2h-2zM8 26h2v2H8zM11 26h2v2h-2zM14 26h2v2h-2z" fill="#b4b4b4" />
              </svg>
            </div>
          </footer>
        </div>
      </div>
    </div>
  )
}
